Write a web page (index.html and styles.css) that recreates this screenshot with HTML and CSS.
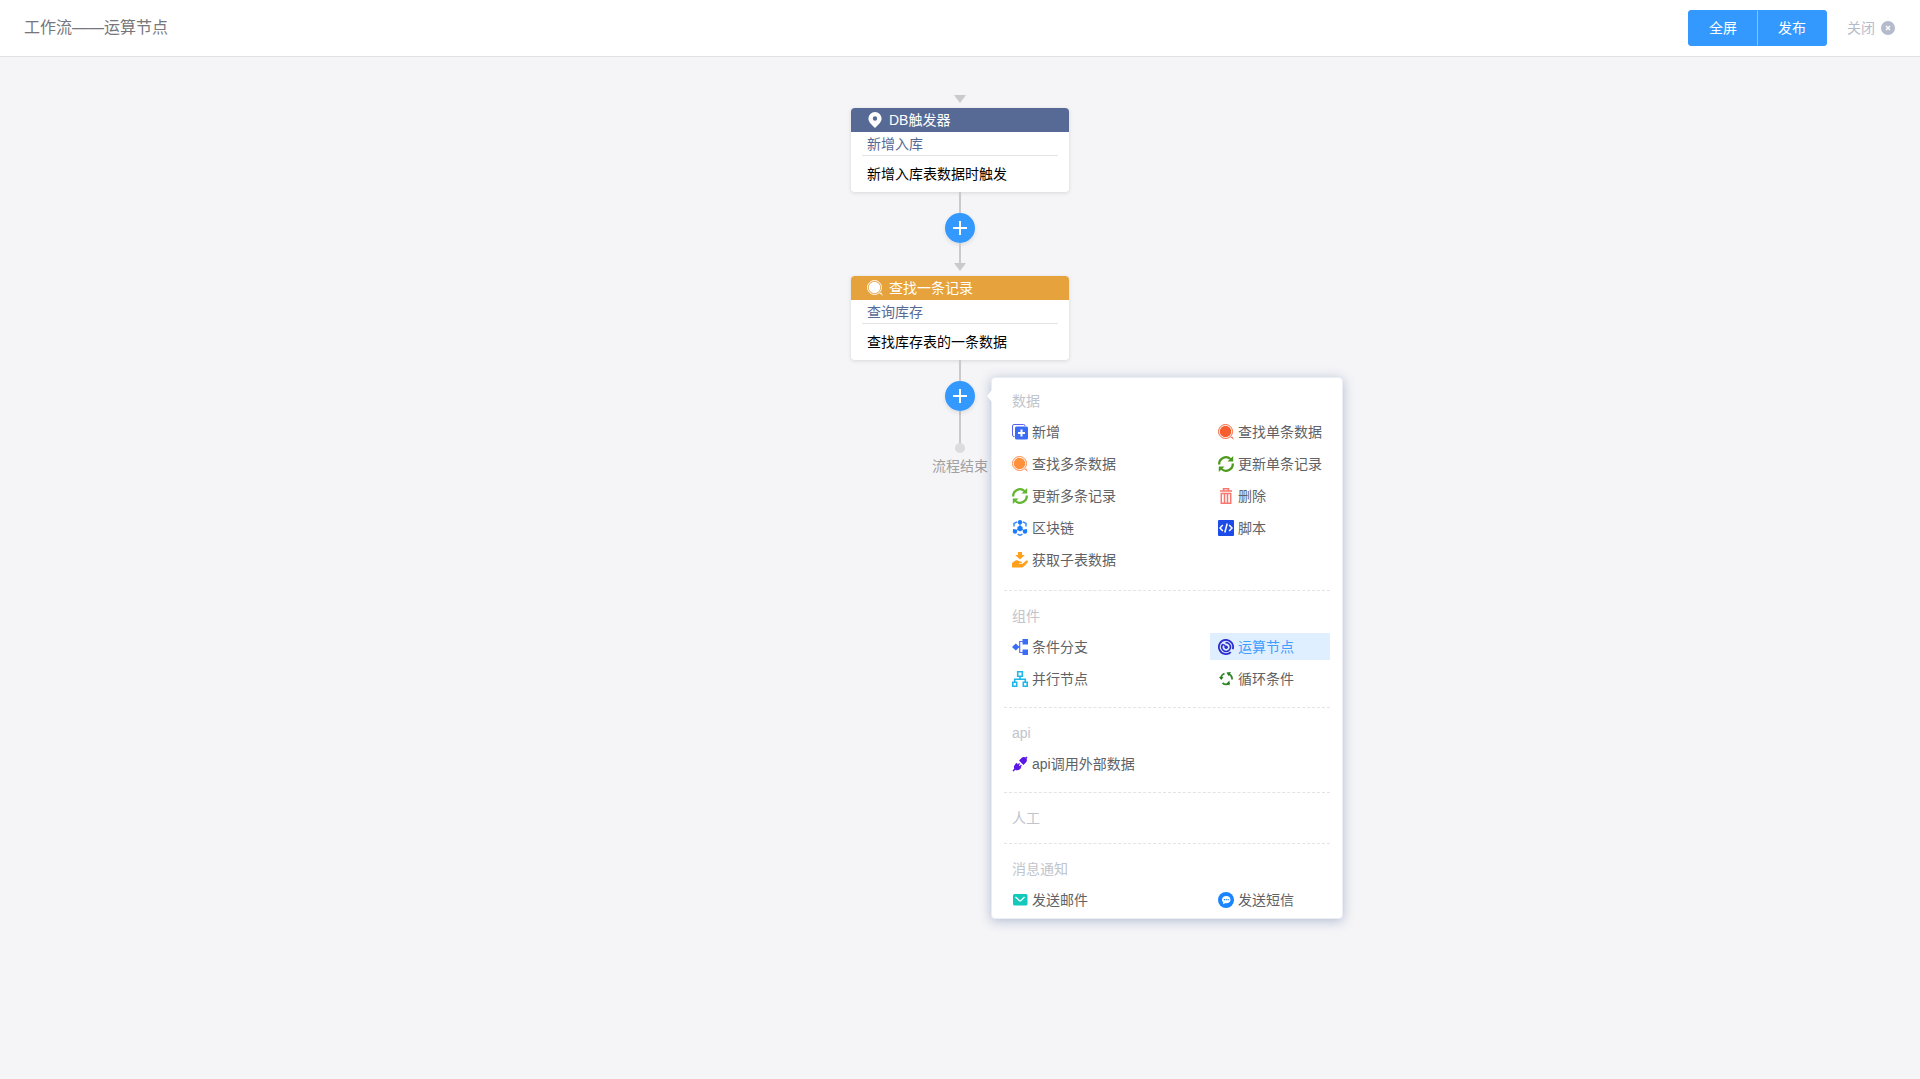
FILE: index.html
```html
<!DOCTYPE html>
<html lang="zh-CN">
<head>
  <meta charset="UTF-8" />
  <meta name="viewport" content="width=device-width, initial-scale=1.0"/>
  <title>工作流——运算节点</title>
  <link rel="stylesheet" href="styles.css">
</head>
<body>

<header class="header">
  <h1 class="title">工作流——运算节点</h1>
  <div class="actions">
    <div class="btn-group">
      <button type="button" class="btn">全屏</button>
      <button type="button" class="btn">发布</button>
    </div>
    <button type="button" class="close-btn">
      关闭
      <svg width="14" height="14" viewBox="0 0 14 14"><circle cx="7" cy="7" r="7" fill="#b4bccc"/><path d="M5 5l4 4M9 5l-4 4" stroke="#fff" stroke-width="1.3"/></svg>
    </button>
  </div>
</header>

<main class="flow">
  <div class="arrow"></div>

  <section class="node">
    <div class="node-head node-head-trigger">
      <svg class="icon" viewBox="0 0 16 16"><path fill="#fff" fill-rule="evenodd" d="M8 0a6.6 6.6 0 0 0-6.6 6.6C1.400 10.500 5.500 13.500 8 16c2.500-2.500 6.600-5.500 6.600-9.400A6.600 6.600 0 0 0 8 0zm0 4.300a2.200 2.200 0 1 1 0 4.400 2.200 2.200 0 0 1 0-4.400z"/></svg>
      DB触发器
    </div>
    <div class="node-name">新增入库</div>
    <div class="node-desc">新增入库表数据时触发</div>
  </section>

  <div class="line"></div>
  <button type="button" class="add-btn" aria-label="添加节点">
    <svg width="14" height="14" viewBox="0 0 14 14"><path d="M7 0v14M0 7h14" stroke="#fff" stroke-width="2"/></svg>
  </button>
  <div class="line line-next"></div>
  <div class="arrow"></div>

  <section class="node">
    <div class="node-head node-head-search">
      <svg class="icon" viewBox="0 0 16 16"><circle cx="7.500" cy="7.500" r="7" fill="none" stroke="#fff"/><circle cx="7.500" cy="7.500" r="5.700" fill="#fff"/><path d="M11.500 13.500h1.500l3 2.500-1.800-3.500" fill="#fff"/></svg>
      查找一条记录
    </div>
    <div class="node-name">查询库存</div>
    <div class="node-desc">查找库存表的一条数据</div>
  </section>

  <div class="line"></div>
  <div class="add-wrap">
    <button type="button" class="add-btn" aria-label="添加节点">
      <svg width="14" height="14" viewBox="0 0 14 14"><path d="M7 0v14M0 7h14" stroke="#fff" stroke-width="2"/></svg>
    </button>

    <div class="popover">
      <section class="group">
        <h2 class="group-title">数据</h2>
        <div class="group-items">
          <button type="button" class="item">
            <svg class="icon" viewBox="0 0 16 16"><path d="M2.500 12.500H2A1.500 1.500 0 0 1 .5 11V2A1.500 1.500 0 0 1 2 .5h9.500A1.500 1.500 0 0 1 13 2" fill="none" stroke="#5d63ee"/><rect x="3" y="2.500" width="13" height="13" rx="1.500" fill="#3a6cf6"/><path d="M9.500 5.500v7M6 9h7" stroke="#fff" stroke-width="2"/></svg>
            新增
          </button>
          <button type="button" class="item">
            <svg class="icon" viewBox="0 0 16 16"><circle cx="7.500" cy="7.500" r="7" fill="none" stroke="#f4663c"/><circle cx="7.500" cy="7.500" r="5.700" fill="#f65d2f"/><path d="M11.500 13.500h1.500l3 2.500-1.800-3.500" fill="#f4663c"/></svg>
            查找单条数据
          </button>
          <button type="button" class="item">
            <svg class="icon" viewBox="0 0 16 16"><circle cx="7.500" cy="7.500" r="7" fill="none" stroke="#fb8a4c"/><circle cx="7.500" cy="7.500" r="5.700" fill="#ff913c"/><path d="M11.500 13.500h1.500l3 2.500-1.800-3.500" fill="#fb8a4c"/></svg>
            查找多条数据
          </button>
          <button type="button" class="item">
            <svg class="icon" viewBox="0 0 16 16"><path d="M1.200 8.500A6.800 6.800 0 0 1 12.500 3M14.800 7.500A6.800 6.800 0 0 1 3.500 13" fill="none" stroke="#4c9a1c" stroke-width="2.300"/><path d="M9.500 5.500h5.700V0zM6.500 10.500H.8V16z" fill="#4c9a1c"/></svg>
            更新单条记录
          </button>
          <button type="button" class="item">
            <svg class="icon" viewBox="0 0 16 16"><path d="M1.200 8.500A6.800 6.800 0 0 1 12.500 3M14.800 7.500A6.800 6.800 0 0 1 3.500 13" fill="none" stroke="#62b530" stroke-width="2.300"/><path d="M9.500 5.500h5.700V0zM6.500 10.500H.8V16z" fill="#62b530"/></svg>
            更新多条记录
          </button>
          <button type="button" class="item">
            <svg class="icon" viewBox="0 0 16 16"><path d="M5.500 2.500V.8h5v1.700M2 3h12M3.300 5.500v9.700h9.400V5.500zM6.500 6v9M9.500 6v9" fill="none" stroke="#f8766d" stroke-width="1.500"/></svg>
            删除
          </button>
          <button type="button" class="item">
            <svg class="icon" viewBox="0 0 16 16"><path d="M5 1.800L2 3.500v3M11 1.800l3 1.700v3M1.800 9v3M14.200 9v3M5.500 14.200L8 15.300l2.500-1.100" fill="none" stroke="#2c82ff" stroke-width="1.400"/><circle cx="8" cy="2.200" r="2.200" fill="#1a7bff"/><circle cx="3" cy="11.500" r="2.200" fill="#1a7bff"/><circle cx="13" cy="11.500" r="2.200" fill="#1a7bff"/><path d="M8 2v5M3.500 11l3-2M12.500 11l-3-2" stroke="#1a7bff"/><path d="M8 5.500l2.600 1.600v3L8 11.500l-2.600-1.400v-3z" fill="#1a7bff"/></svg>
            区块链
          </button>
          <button type="button" class="item">
            <svg class="icon" viewBox="0 0 16 16"><rect width="16" height="16" rx="1" fill="#1d4be8"/><path d="M4.800 5L2 8l2.800 3M11.200 5L14 8l-2.800 3M9.200 3.500l-2.400 9" fill="none" stroke="#fff" stroke-width="1.500"/></svg>
            脚本
          </button>
          <button type="button" class="item">
            <svg class="icon" viewBox="0 0 16 16"><path d="M6 0h4v3h2.800L8 7.500 3.200 3H6zM0 11l3.200-2.200c1-.6 2-.6 3 0 .8.500 1.600.7 3 .7.900 0 .9 1.500 0 1.500H7v.7h3.500L14 8.800c1-.8 2.500 0 1.800 1.100-1.300 2-3 3.800-4.800 5.100-.5.400-1 .5-1.600.5H0z" fill="#ff9f1c"/></svg>
            获取子表数据
          </button>
        </div>
      </section>

      <section class="group">
        <h2 class="group-title">组件</h2>
        <div class="group-items">
          <button type="button" class="item">
            <svg class="icon" viewBox="0 0 16 16"><path d="M4 8h4M11 2.500H7.700v11H11" fill="none" stroke="#5b6ff0" stroke-width="1.200"/><path d="M0 8l3.800-3.500L7.600 8l-3.800 3.500z" fill="#3a6cf6"/><rect x="10.500" width="5.500" height="5.500" fill="#3a6cf6"/><rect x="10.500" y="10.500" width="5.500" height="5.500" fill="#3a6cf6"/></svg>
            条件分支
          </button>
          <button type="button" class="item item-active">
            <svg class="icon" viewBox="0 0 16 16"><path d="M12.800 13.200A7.100 7.100 0 1 1 14.700 10.300M12 14.200l-2.500.8" fill="none" stroke="#2d2dcf" stroke-width="1.800"/><path d="M7.500 3.700a4.400 4.400 0 1 1-2.700 1.400" fill="none" stroke="#2d2dcf" stroke-width="1.600"/><path d="M5.300 5.300L8 8" fill="none" stroke="#2d2dcf" stroke-width="1.500"/><circle cx="8.200" cy="8.200" r="1.700" fill="#2d2dcf"/></svg>
            运算节点
          </button>
          <button type="button" class="item">
            <svg class="icon" viewBox="0 0 16 16"><path d="M5.700.8h4.600v4.400H5.700zM.8 11.200h3.900v4H.8zM11.300 11.200h3.900v4h-3.900zM8 5.200v3M2.700 11V8.200h10.600V11" fill="none" stroke="#1fb6ea" stroke-width="1.600"/></svg>
            并行节点
          </button>
          <button type="button" class="item">
            <svg class="icon" viewBox="0 0 16 16"><path d="M3 7.500A5.500 5.500 0 0 1 6.500 2.500M11 3a5.500 5.500 0 0 1 3 5.500M11.500 12A5.500 5.500 0 0 1 4.500 12" fill="none" stroke="#32882a" stroke-width="1.800"/><path d="M1 6l2.300 3L5.500 6zM8.500 1.500l4.500-.5-2.500 4zM11.500 9.500v5L8.500 12.500z" fill="#237c1c"/></svg>
            循环条件
          </button>
        </div>
      </section>

      <section class="group">
        <h2 class="group-title">api</h2>
        <div class="group-items">
          <button type="button" class="item">
            <svg class="icon" viewBox="0 0 16 16"><path d="M1 15l2.500-2.500M12.500 3.500L15 1" stroke="#5a17e6" stroke-width="1.500"/><path d="M7 4.500l2.500-2.500c1.500-1.400 3.200-1.300 4.500-.1 1.300 1.300 1.300 3-.1 4.500L11.400 9zM4.300 6.800l1.500 1.500 1.300-1.300 1 1-1.300 1.300.8.800 1.300-1.300 1 1-1.200 1.300.6.600-1.400 1.500c-1.600 1.500-3.600 1.500-5 .2-1.400-1.400-1.300-3.400.2-5z" fill="#5a17e6"/></svg>
            api调用外部数据
          </button>
        </div>
      </section>

      <section class="group">
        <h2 class="group-title">人工</h2>
      </section>

      <section class="group">
        <h2 class="group-title">消息通知</h2>
        <div class="group-items">
          <button type="button" class="item">
            <svg class="icon" viewBox="0 0 16 16"><rect x="1" y="2" width="14.500" height="11.500" rx="1.500" fill="#13c9bb"/><path d="M3.500 5l3.700 3.500c.6.500 1.200.5 1.800 0L12.500 5" fill="none" stroke="#fff" stroke-width="1.300"/></svg>
            发送邮件
          </button>
          <button type="button" class="item">
            <svg class="icon" viewBox="0 0 16 16"><circle cx="8" cy="8" r="8" fill="#1a85ff"/><path d="M8.300 4C5.700 4 4 5.700 4 7.700c0 1.100.5 2 1.300 2.700l-.3 1.800 2-1c.4.100.9.100 1.300.1 2.600 0 4.200-1.600 4.200-3.600S10.900 4 8.300 4z" fill="#fff"/><path d="M5.800 7.700h1.200M7.700 7.700h1.200M9.600 7.700h1.200" stroke="#1a85ff" stroke-width="1.200"/></svg>
            发送短信
          </button>
        </div>
      </section>
    </div>
  </div>
  <div class="line line-end"></div>
  <div class="end-dot"></div>
  <div class="end-text">流程结束</div>
</main>

</body>
</html>
```
FILE: styles.css
```css
* {
  box-sizing: border-box;
}
body {
  margin: 0;
  min-height: 100vh;
  background: #f5f5f7;
  font-family: "Liberation Sans", "Noto Sans CJK SC", sans-serif;
  font-size: 14px;
  line-height: 20px;
  color: #606266;
}
button {
  padding: 0;
  border: 0;
  background: none;
  font: inherit;
  color: inherit;
  cursor: pointer;
}
svg {
  display: block;
}
.icon {
  width: 16px;
  height: 16px;
  flex-shrink: 0;
}

/* header */
.header {
  display: flex;
  align-items: center;
  justify-content: space-between;
  height: 57px;
  padding: 0 25px 0 24px;
  background: #fff;
  border-bottom: 1px solid #e0e0e0;
}
.title {
  margin: 0;
  font-size: 16px;
  font-weight: normal;
  color: #76767c;
}
.actions {
  display: flex;
  align-items: center;
  gap: 20px;
}
.btn-group {
  display: flex;
  border-radius: 4px;
  overflow: hidden;
}
.btn {
  height: 36px;
  padding: 0 20px;
  border: 1px solid #3399ff;
  background: #3399ff;
  color: #fff;
}
.btn + .btn {
  margin-left: -1px;
  border-left-color: #85c2ff;
}
.close-btn {
  display: flex;
  align-items: center;
  gap: 6px;
  color: #b4bccc;
}

/* flow */
.flow {
  display: flex;
  flex-direction: column;
  align-items: center;
  padding: 38px 0;
}
.arrow {
  border: 6px solid transparent;
  border-top: 8px solid #cacaca;
  border-bottom: 0;
  margin-bottom: 5px;
}
.line {
  width: 2px;
  height: 21px;
  background: #cacaca;
}
.line-next {
  height: 20px;
}
.line-end {
  height: 32px;
}
.node {
  width: 218px;
  height: 84px;
  background: #fff;
  border-radius: 4px;
  overflow: hidden;
  box-shadow: 0 1px 4px rgba(0, 0, 0, 0.12);
}
.node-head {
  display: flex;
  align-items: center;
  gap: 6px;
  height: 24px;
  padding: 0 16px;
  color: #fff;
}
.node-head-trigger {
  background: #576a95;
}
.node-head-search {
  background: #e6a23c;
}
.node-name {
  height: 24px;
  margin: 0 11px;
  padding: 2px 5px;
  border-bottom: 1px solid #e4e4e4;
  color: #576a95;
}
.node-desc {
  padding: 8px 16px;
  color: #000;
}
.add-btn {
  display: flex;
  align-items: center;
  justify-content: center;
  width: 30px;
  height: 30px;
  border-radius: 50%;
  background: #3399ff;
  box-shadow: 0 2px 4px rgba(0, 0, 0, 0.1);
}
.add-wrap {
  position: relative;
}
.end-dot {
  width: 10px;
  height: 10px;
  border-radius: 50%;
  background: #dbdcdc;
}
.end-text {
  margin-top: 3px;
  color: #a0a0a3;
}

/* popover */
.popover {
  position: absolute;
  top: -4px;
  left: 46px;
  z-index: 10;
  width: 352px;
  padding: 0 12px;
  background: #fff;
  border: 1px solid #ebeef5;
  border-radius: 4px;
  box-shadow: 0 2px 12px rgba(50, 80, 140, 0.35);
}
.popover::before {
  content: "";
  position: absolute;
  top: 12px;
  left: -5px;
  border: 6px solid transparent;
  border-right: 5px solid #fff;
  border-left: 0;
}
.group {
  padding: 15px 0;
  border-bottom: 1px dashed #e4e4e4;
}
.group:first-child {
  padding: 13px 0 17px;
}
.group:last-child {
  padding-bottom: 5px;
  border-bottom: 0;
}
.group-title {
  margin: 0;
  padding-left: 8px;
  font-size: 14px;
  font-weight: normal;
  color: #c0c4cc;
}
.group-items {
  display: grid;
  grid-template-columns: 120px 120px;
  justify-content: space-between;
  row-gap: 5px;
  margin-top: 7px;
}
.item {
  display: flex;
  align-items: center;
  gap: 4px;
  height: 27px;
  padding: 0 8px;
  white-space: nowrap;
}
.item:hover,
.item-active {
  background: #e0efff;
  color: #409eff;
}
```
